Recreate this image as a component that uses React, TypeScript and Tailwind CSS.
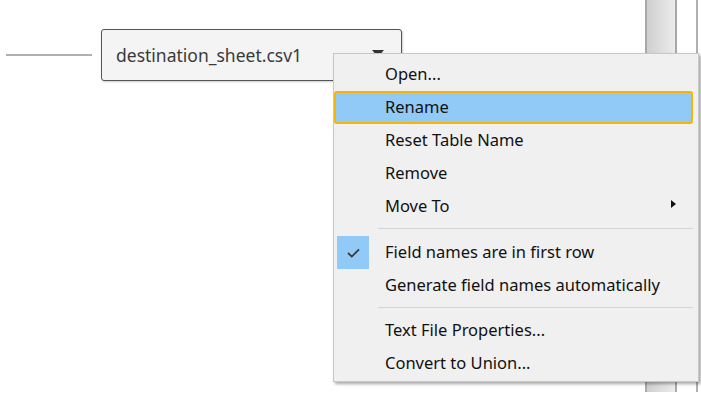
import React from 'react'

type Item =
  | { kind: 'item'; label: string; active?: boolean; checked?: boolean; submenu?: boolean }
  | { kind: 'sep'; h: string }

const items: Item[] = [
  { kind: 'item', label: 'Open...' },
  { kind: 'item', label: 'Rename', active: true },
  { kind: 'item', label: 'Reset Table Name' },
  { kind: 'item', label: 'Remove' },
  { kind: 'item', label: 'Move To', submenu: true },
  { kind: 'sep', h: 'h-[13px]' },
  { kind: 'item', label: 'Field names are in first row', checked: true },
  { kind: 'item', label: 'Generate field names automatically' },
  { kind: 'sep', h: 'h-[12px]' },
  { kind: 'item', label: 'Text File Properties...' },
  { kind: 'item', label: 'Convert to Union...' },
]

const font = { fontFamily: '"Noto Sans", "Open Sans", sans-serif' }

function MenuRow({ it }: { it: Extract<Item, { kind: 'item' }> }) {
  const base = 'h-[33px] flex items-center text-[16.5px] text-[#111]'
  const skin = it.active
    ? 'mr-[5px] pl-[1px] bg-[#91c9f7] border-2 border-[#f7b500] rounded-[3px]'
    : 'pl-[3px] pr-[22px]'
  return (
    <div className={`${base} ${skin}`}>
      <div className={`w-[32px] h-full flex items-center justify-center ${it.checked ? 'bg-[#91c9f7]' : ''}`}>
        {it.checked && (
          <svg width="13" height="10" viewBox="0 0 13 10">
            <path d="M1 5 L4.8 8.6 L12 1.4" fill="none" stroke="#3a3a3a" strokeWidth="1.8" />
          </svg>
        )}
      </div>
      <span className="ml-[16px]">{it.label}</span>
      {it.submenu && (
        <div className="ml-auto w-0 h-0 -mt-[6px] border-y-[4.5px] border-y-transparent border-l-[5px] border-l-[#111]" />
      )}
    </div>
  )
}

export default function App() {
  return (
    <div className="relative w-[701px] h-[403px] bg-white overflow-hidden" style={font}>
      {/* scrollbar fragment behind the menu */}
      <div className="absolute left-[645px] top-0 h-[392px] flex">
        <div className="w-[32px] h-full border-x-2 border-[#a8a8a8] bg-gradient-to-r from-[#cfcfcf] to-[#ececec]" />
        <div className="ml-[19px] w-[2px] h-full bg-[#b0b0b0]" />
      </div>

      {/* canvas: connector + table pill */}
      <div className="relative flex items-center pt-[29px] pl-[6px]">
        <div className="w-[86px] h-[2px] bg-[#b0b0b0]" />
        <div className="ml-[9px] w-[301px] h-[52px] bg-[#f4f4f4] border border-[#555] rounded-[3px] shadow-[1px_1px_2px_rgba(0,0,0,0.2)] flex items-center pl-[14px] pr-[17px]">
          <span className="text-[17.5px] text-[#3a3a3a]">destination_sheet.csv1</span>
          <div className="ml-auto -mt-[3px] w-0 h-0 border-x-[6px] border-x-transparent border-t-[7px] border-t-[#333]" />
        </div>
      </div>

      {/* context menu */}
      <div className="absolute left-[333px] top-[53px] w-[366px] bg-[#f0f0f0] border border-[#c8c8c8] pt-[4px] pb-[1px] shadow-[2px_2px_3px_rgba(0,0,0,0.35)]">
        {items.map((it, i) =>
          it.kind === 'sep' ? (
            <div key={i} className={`${it.h} pt-[5px] pl-[44px] pr-[5px]`}>
              <div className="h-px bg-[#d4d4d4]" />
            </div>
          ) : (
            <MenuRow key={i} it={it} />
          )
        )}
      </div>
    </div>
  )
}
